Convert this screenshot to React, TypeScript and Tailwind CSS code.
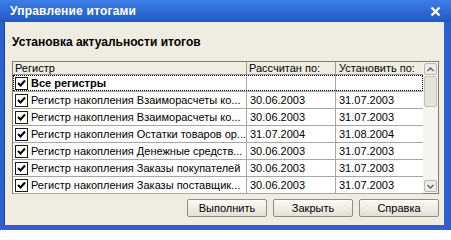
import React from 'react';

const rows = [
  { name: 'Регистр накопления Взаиморасчеты ко...', calc: '30.06.2003', set: '31.07.2003' },
  { name: 'Регистр накопления Взаиморасчеты ко...', calc: '30.06.2003', set: '31.07.2003' },
  { name: 'Регистр накопления Остатки товаров ор...', calc: '31.07.2004', set: '31.08.2004' },
  { name: 'Регистр накопления Денежные средств...', calc: '30.06.2003', set: '31.07.2003' },
  { name: 'Регистр накопления Заказы покупателей', calc: '30.06.2003', set: '31.07.2003' },
  { name: 'Регистр накопления Заказы поставщик...', calc: '30.06.2003', set: '31.07.2003' },
];

function Check() {
  return (
    <div className="w-[13px] h-[13px] shrink-0 bg-white border border-[#1c1c1c] flex items-center justify-center">
      <svg width="9" height="9" viewBox="0 0 9 9">
        <path d="M1 4 L3.5 6.5 L8 1.5" stroke="#000" strokeWidth="2" fill="none" />
      </svg>
    </div>
  );
}

function Arrow({ up }: { up?: boolean }) {
  return (
    <div className="h-[12px] mx-[1px] bg-[#ecebe4] border border-[#b8b7ae] rounded-[2px] flex items-center justify-center">
      <svg width="7" height="5" viewBox="0 0 7 5">
        <path d={up ? 'M0.5 4 L3.5 1 L6.5 4' : 'M0.5 1 L3.5 4 L6.5 1'} stroke="#4d6185" strokeWidth="1.3" fill="none" />
      </svg>
    </div>
  );
}

function Btn({ children }: { children: React.ReactNode }) {
  return (
    <button className="w-[80px] h-[18px] rounded-[2px] border border-[#8f8d84] bg-gradient-to-b from-[#fbfaf6] to-[#e3e0d5] text-[11px] leading-none text-black">
      {children}
    </button>
  );
}

export default function App() {
  return (
    <div className="w-[451px] h-[230px] bg-[#2c5fd1] flex flex-col font-['Liberation_Sans',Arial,sans-serif] overflow-hidden">
      {/* Title bar */}
      <div className="h-[22px] shrink-0 bg-gradient-to-b from-[#3d7ee6] to-[#2456c9] flex items-center pl-[10px] pr-[10px]">
        <span className="text-white font-bold text-[12px] tracking-[0.2px]">Управление итогами</span>
        <svg className="ml-auto" width="11" height="11" viewBox="0 0 11 11">
          <path d="M1.5 1.5 L9.5 9.5 M9.5 1.5 L1.5 9.5" stroke="#fff" strokeWidth="2.4" />
        </svg>
      </div>

      {/* Body */}
      <div className="flex-1 ml-[4px] mr-[7px] mb-[5px] bg-[#efece2] border-l border-[#1d3f9c] flex flex-col pl-[7px] pr-[5px] pt-[13px]">
        <div className="text-[12px] font-bold leading-[14px] text-black">Установка актуальности итогов</div>

        <div className="mt-[12px] h-[133px] border border-[#7d7b72] flex bg-white">
          <div className="flex-1 flex flex-col text-[11px] text-black">
            {/* Header */}
            <div className="h-[13px] flex bg-[#efece2] border-b border-[#9c9a90] leading-[12px]">
              <div className="w-[234px] border-r border-[#9c9a90] pl-[2px]">Регистр</div>
              <div className="w-[89px] border-r border-[#9c9a90] pl-[2px]">Рассчитан по:</div>
              <div className="flex-1 pl-[3px]">Установить по:</div>
            </div>

            {/* All registers */}
            <div className="relative h-[17px] flex border-b border-[#a8a7a0]">
              <div className="w-[234px] border-r border-[#a8a7a0] flex items-center pl-[2px] gap-[3px]">
                <Check />
                <span className="font-bold">Все регистры</span>
              </div>
              <div className="w-[89px] border-r border-[#a8a7a0]" />
              <div className="flex-1" />
              <div className="absolute inset-0 border border-dotted border-black" />
            </div>

            {rows.map((r, i) => (
              <div key={i} className="h-[17px] flex border-b border-[#a8a7a0]">
                <div className="w-[234px] border-r border-[#a8a7a0] flex items-center pl-[2px] gap-[3px] whitespace-nowrap overflow-hidden">
                  <Check />
                  <span>{r.name}</span>
                </div>
                <div className="w-[89px] border-r border-[#a8a7a0] flex items-center pl-[3px]">{r.calc}</div>
                <div className="flex-1 flex items-center pl-[3px]">{r.set}</div>
              </div>
            ))}
          </div>

          {/* Scrollbar */}
          <div className="w-[15px] bg-[#f5f4ee] flex flex-col py-[1px]">
            <Arrow up />
            <div className="h-[31px] mt-[1px] mx-[1px] bg-[#e6e4da] border border-[#c2c0b6] rounded-[2px]" />
            <div className="flex-1" />
            <Arrow />
          </div>
        </div>

        <div className="mt-[5px] flex justify-end gap-[6px]">
          <Btn>Выполнить</Btn>
          <Btn>Закрыть</Btn>
          <Btn>Справка</Btn>
        </div>
      </div>
    </div>
  );
}
